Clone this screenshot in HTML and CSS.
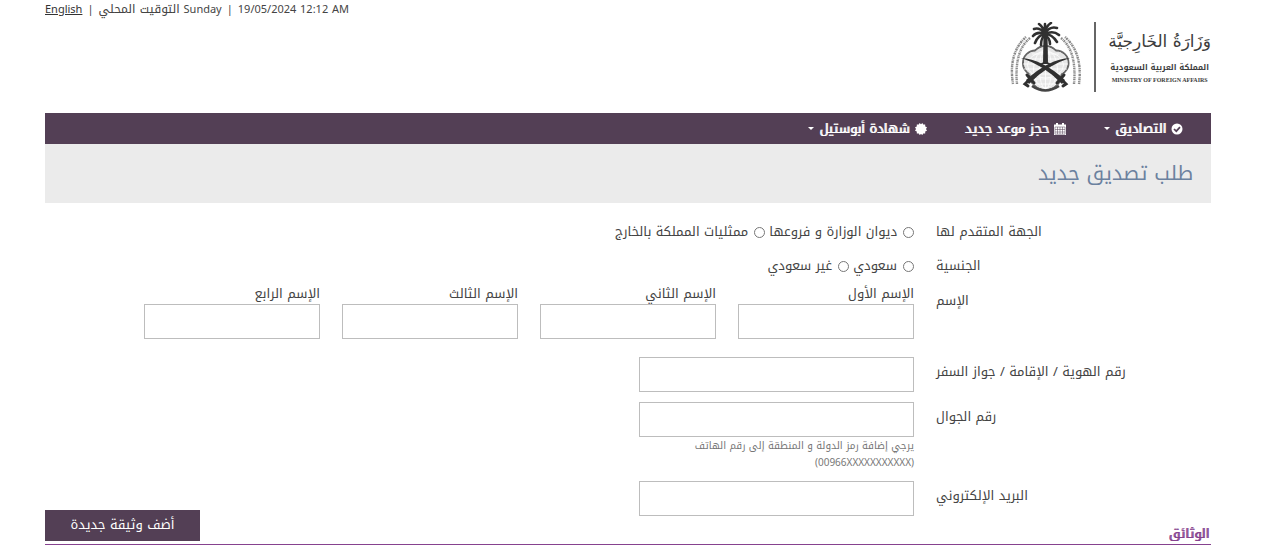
FILE: index.html
```html
<!DOCTYPE html>
<html lang="ar" dir="rtl">
<head>
<meta charset="utf-8">
<meta name="viewport" content="width=device-width, initial-scale=1">
<title>طلب تصديق جديد</title>
<link rel="stylesheet" href="styles.css">
</head>
<body>
<div class="page">
  <div class="topbar" dir="ltr"><a href="#">English</a><span>|</span><span><bdi>التوقيت المحلي</bdi> Sunday</span><span>|</span><span>19/05/2024 12:12 AM</span></div>

  <header class="brand">
    <div class="brand-text">
      <span class="brand-name">وَزَارَةُ الخَارِجيَّة</span>
      <span class="brand-country">المملكة العربية السعودية</span>
      <span class="brand-en" dir="ltr">MINISTRY OF FOREIGN AFFAIRS</span>
    </div>
    <svg class="emblem" viewBox="3 4 72 70" aria-hidden="true">
      <g fill="#e6e6e6" stroke="#666" stroke-width="2">
        <circle cx="38.500" cy="56" r="16"/>
        <circle cx="28.500" cy="45" r="12.500"/>
        <circle cx="49" cy="45" r="12.500"/>
        <circle cx="38.500" cy="42" r="14"/>
      </g>
      <g fill="#e6e6e6"><circle cx="38.500" cy="56" r="15"/><circle cx="28.500" cy="45" r="11.500"/><circle cx="49" cy="45" r="11.500"/><circle cx="38.500" cy="42" r="13"/></g>
      <g fill="none" stroke="#fff" stroke-width=".8">
        <path d="M17 41H60M16 46H61M17 51H60M22 56H54M22 61H54M25 66H51M25 36H52M38.500 31V71"/>
        <ellipse cx="38.500" cy="51" rx="6" ry="20"/><ellipse cx="38.500" cy="51" rx="12" ry="19"/><ellipse cx="38.500" cy="47" rx="18" ry="13"/>
      </g>
      <path d="M25 68Q38 77 52 68" fill="none" stroke="#444" stroke-width="2.500"/>
      <g fill="none" stroke="#888" stroke-width="2.400">
        <path d="M23 20Q7 33 10 66" stroke-dasharray="1.600 .7 .8 .6"/>
        <path d="M19 19Q1 35 6 66" stroke-dasharray="1 .6 2 .8"/>
        <path d="M54 20Q70 33 67 66" stroke-dasharray="1.600 .7 .8 .6"/>
        <path d="M58 19Q76 35 72 66" stroke-dasharray="1 .6 2 .8"/>
      </g>
      <path d="M36.500 16H40.500L41 46H36Z" fill="#303030"/>
      <path d="M33 46Q38.500 42 44 46Z" fill="#303030"/>
      <g fill="none" stroke="#303030" stroke-width="2.600" stroke-linecap="round">
        <path d="M38 15Q36 9 32 6M38 15Q39 8 44 5M38 15Q32 9 27 11M38 15Q43 8 50 10M38 16Q30 13 26 18M38 16Q46 12 52 17M38 16Q31 17 28 25M38 16Q45 16 50 24M38 17Q34 20 34 27M38 17Q43 20 43 26M38 15L38 6"/>
      </g>
      <g fill="#303030">
        <path d="M14 40Q35 41 58 62L55 66Q37 47 14 40Z"/>
        <path d="M63 40Q42 41 19 62L22 66Q40 47 63 40Z"/>
      </g>
      <g fill="none" stroke="#303030" stroke-width="3" stroke-linecap="round">
        <path d="M50 65L57 57M55 62L59 66L56 68M27 65L20 57M22 62L18 66L21 68"/>
      </g>
    </svg>
  </header>

  <nav class="nav">
    <a href="#"><svg class="ico" viewBox="0 0 12 12" aria-hidden="true"><circle cx="6" cy="6" r="5.500" fill="#fff"/><path d="M3 6L5.300 8.200L9 4.200" fill="none" stroke="#533f55" stroke-width="1.700"/></svg>التصاديق<i class="caret"></i></a>
    <a href="#"><svg class="ico" viewBox="0 0 12 12" aria-hidden="true"><path d="M0 1.500H12V12H0ZM2 0H4V2H2ZM8 0H10V2H8Z" fill="#fff"/><path d="M1 4H11M1 6.500H11M1 9H11M1 11.200H11M1 4V11.200M3.500 4V11.200M6 4V11.200M8.500 4V11.200M11 4V11.200" stroke="#533f55" stroke-width=".5"/></svg>حجز موعد جديد</a>
    <a href="#"><svg class="ico" viewBox="0 0 12 12" aria-hidden="true"><path d="M6 1.200L7.400 0L8.200 1.600L10.200 1.500L10.200 3.400L12 4.300L11 6L12 7.700L10.200 8.600L10.200 10.500L8.200 10.400L7.400 12L6 10.900L4.600 12L3.800 10.400L1.800 10.500L1.800 8.600L0 7.700L1 6L0 4.300L1.800 3.400L1.800 1.500L3.800 1.600L4.600 0Z" fill="#fff"/></svg>شهادة أبوستيل<i class="caret"></i></a>
  </nav>

  <h1 class="title">طلب تصديق جديد</h1>

  <form class="form">
    <div class="row" role="radiogroup" aria-labelledby="dest">
      <span class="label" id="dest">الجهة المتقدم لها</span>
      <div class="choices">
        <label><input type="radio" name="dest">ديوان الوزارة و فروعها</label>
        <label><input type="radio" name="dest">ممثليات المملكة بالخارج</label>
      </div>
    </div>
    <div class="row" role="radiogroup" aria-labelledby="nat">
      <span class="label" id="nat">الجنسية</span>
      <div class="choices">
        <label><input type="radio" name="nat">سعودي</label>
        <label><input type="radio" name="nat">غير سعودي</label>
      </div>
    </div>
    <div class="row row-name" role="group" aria-labelledby="fullname">
      <span class="label" id="fullname">الإسم</span>
      <div class="names">
        <label>الإسم الأول<input type="text"></label>
        <label>الإسم الثاني<input type="text"></label>
        <label>الإسم الثالث<input type="text"></label>
        <label>الإسم الرابع<input type="text"></label>
      </div>
    </div>
    <div class="row row-field">
      <label class="label" for="idno">رقم الهوية / الإقامة / جواز السفر</label>
      <div class="field"><input type="text" id="idno"></div>
    </div>
    <div class="row row-field">
      <label class="label" for="mobile">رقم الجوال</label>
      <div class="field">
        <input type="tel" id="mobile" aria-describedby="hint">
        <p class="hint" id="hint">يرجي إضافة رمز الدولة و المنطقة إلى رقم الهاتف<br><bdi dir="ltr">(00966XXXXXXXXXXX)</bdi></p>
      </div>
    </div>
    <div class="row row-field">
      <label class="label" for="email">البريد الإلكتروني</label>
      <div class="field"><input type="email" id="email"></div>
    </div>
    <div class="docs">
      <h2>الوثائق</h2>
      <button type="button">أضف وثيقة جديدة</button>
    </div>
  </form>
</div>
</body>
</html>
```
FILE: styles.css
```css
* { box-sizing: border-box; }
body {
  margin: 0;
  background: #fff;
  color: #444;
  font: 13px/18px "Droid Arabic Kufi", "Noto Kufi Arabic", "Noto Sans", "DejaVu Sans", sans-serif;
}
.page { padding: 0 52px 0 45px; }
.topbar { display: flex; align-items: baseline; gap: 5px; height: 18px; font-size: 11px; white-space: nowrap; }
.topbar bdi { font-size: 12px; }
.topbar a { color: #333; text-decoration: underline; }

.brand { display: flex; align-items: center; height: 95px; padding-bottom: 21px; padding-top: 4px; color: #3c3c3c; }
.brand-text { display: flex; flex-direction: column; align-items: center; height: 70px; padding-left: 12px; border-left: 2px solid #666; white-space: nowrap; }
.brand-name { font-family: "DejaVu Sans", sans-serif; font-size: 17px; line-height: 38px; }
.brand-country { font-size: 8px; font-weight: bold; line-height: 16px; }
.brand-en { font: bold 6px/8px "Liberation Serif", serif; }
.emblem { width: 72px; height: 70px; margin-right: 12px; }

.nav { display: flex; gap: 38px; height: 31px; padding: 0 28px; background: #533f55; }
.nav a { display: flex; align-items: center; gap: 5px; color: #fff; text-decoration: none; text-shadow: 1px 0 currentColor; white-space: nowrap; }
.ico { width: 12px; height: 12px; }
.caret { border: 3px solid transparent; border-top-color: #fff; border-bottom: 0; }

.title { margin: 0; padding: 0 18px; background: #ebebeb; color: #6b819f; font-size: 20px; font-weight: normal; line-height: 59px; }

.form { padding-top: 20px; }
.row { display: grid; grid-template-columns: 275px 1fr; column-gap: 22px; min-height: 34px; }
.label { justify-self: end; white-space: nowrap; }
.choices { display: flex; gap: 4px; }
.choices label { display: flex; gap: 6px; height: 18px; align-items: center; white-space: nowrap; }
.choices input { width: 11px; height: 11px; margin: 0; }
.row-name { margin-bottom: 18px; }
.row-name .label { padding-top: 1px; }
.names { display: flex; gap: 22px; margin-top: -6px; }
.names label { display: block; width: 176px; white-space: nowrap; }
input[type="text"], input[type="tel"], input[type="email"] { display: block; width: 100%; height: 35px; padding: 0 8px; border: 1px solid #bdbdbd; background: #fff; font: inherit; }
.row-name input { margin-top: 1px; }
.field { width: 275px; }
.row-field { margin-bottom: 10px; }
.row-field .label { padding-top: 6px; }
.hint { margin: 0; color: #777; font-size: 10px; line-height: 17px; white-space: nowrap; }
.docs { display: flex; align-items: flex-end; justify-content: space-between; height: 35px; margin-top: -16px; border-bottom: 1px solid #86428f; }
.docs h2 { margin: 0; padding: 0 2px; color: #86428f; font-size: 13px; font-weight: normal; line-height: 20px; text-shadow: 1px 0 currentColor; }
.docs button { width: 155px; height: 31px; margin-bottom: 3px; padding: 0 0 2px; border: 0; background: #533f55; color: #fff; font: inherit; }
```
